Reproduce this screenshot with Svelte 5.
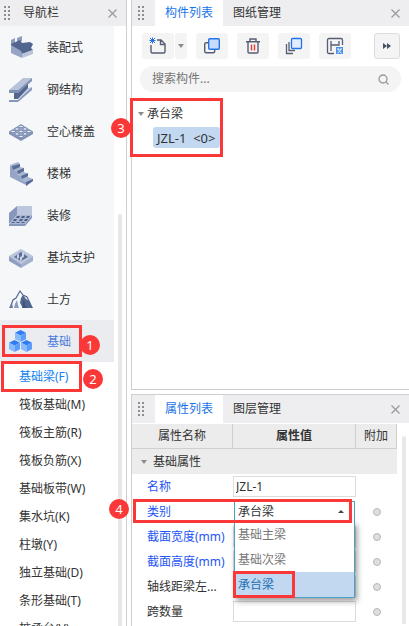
<script>
	const categories = [
		{ id: 'prefab', label: '装配式' },
		{ id: 'steel', label: '钢结构' },
		{ id: 'hollow', label: '空心楼盖' },
		{ id: 'stairs', label: '楼梯' },
		{ id: 'finish', label: '装修' },
		{ id: 'pit', label: '基坑支护' },
		{ id: 'earth', label: '土方' },
		{ id: 'base', label: '基础' }
	];

	const components = [
		'基础梁(F)',
		'筏板基础(M)',
		'筏板主筋(R)',
		'筏板负筋(X)',
		'基础板带(W)',
		'集水坑(K)',
		'柱墩(Y)',
		'独立基础(D)',
		'条形基础(T)',
		'桩承台(V)'
	];

	const kinds = ['基础主梁', '基础次梁', '承台梁'];
	const treeItem = 'JZL-1  <0>';

	const properties = [
		{ id: 'name', label: '名称', value: 'JZL-1', key: true },
		{ id: 'kind', label: '类别', key: true, extra: true },
		{ id: 'width', label: '截面宽度(mm)', value: '', key: true, extra: true },
		{ id: 'height', label: '截面高度(mm)', value: '', key: true, extra: true },
		{ id: 'axis', label: '轴线距梁左...', value: '', extra: true },
		{ id: 'spans', label: '跨数量', value: '', extra: true }
	];

	let category = $state('base');
	let component = $state('基础梁(F)');
	let kind = $state('承台梁');
	let open = $state(true);

	function pick(k) {
		kind = k;
		open = false;
	}
</script>

{#snippet grip()}
	<svg class="grip" width="7" height="14" viewBox="0 0 7 14" fill="#8d8d8d" aria-hidden="true">
		{#each [0, 4, 8, 12] as y}
			<rect x="0" {y} width="2" height="2" />
			<rect x="4" {y} width="2" height="2" />
		{/each}
	</svg>
{/snippet}

{#snippet close()}
	<button class="close" type="button" aria-label="关闭">
		<svg width="9" height="9" viewBox="0 0 9 9" stroke="#999" stroke-width="1.2">
			<path d="M.5 .5l8 8M8.5 .5l-8 8" />
		</svg>
	</button>
{/snippet}

{#snippet cube(x, y)}
	<g transform="translate({x} {y})">
		<path d="M5.5 0L11 2.7 5.5 5.4 0 2.7z" fill="#2f7df6" />
		<path d="M0 2.7l5.5 2.7V12L0 9.3z" fill="#86bbff" />
		<path d="M11 2.7L5.5 5.4V12L11 9.3z" fill="#5b9cfa" />
	</g>
{/snippet}

{#snippet categoryIcon(id)}
	<svg width="24" height="24" viewBox="0 0 24 24" aria-hidden="true">
		{#if id === 'prefab'}
			<path d="M2 4l4-2v5L2 9zM8 2l5-2v5L8 7z" fill="#8f9dbe" />
			<path d="M2 8l9-4 2 3 8-1 3 2-2 4 2 2-11 4-2-3L2 11z" fill="#52668f" />
			<path d="M2 9l10 6 1 3v4L2 17z" fill="#96a5c6" />
			<path d="M13 18l11-4v4l-11 4z" fill="#b9c4da" />
		{:else if id === 'steel'}
			<path d="M0 12L14 0h9L9 12z" fill="#b8c3da" />
			<path d="M0 12h9L23 0v3L9 15H0z" fill="#7f90b5" />
			<path d="M5 15h4L19 6v5L9 21H5z" fill="#52668f" />
			<path d="M9 21L19 10l4-1L9 22z" fill="#c1cbdf" />
			<path d="M9 22L23 9v3L9 24H0v-2z" fill="#8798bc" />
		{:else if id === 'hollow'}
			<path d="M0 11v3l12 7 12-7v-3z" fill="#8190b5" />
			<path d="M12 4l12 7.500-12 7L0 11.500z" fill="#a5b2ce" />
			<g fill="#edf1f8" stroke="#5c7099" stroke-width=".8">
				<ellipse cx="12" cy="6.500" rx="2.200" ry="1.300" />
				<ellipse cx="8" cy="9" rx="2.200" ry="1.300" />
				<ellipse cx="16" cy="9" rx="2.200" ry="1.300" />
				<ellipse cx="4" cy="11.500" rx="2.200" ry="1.300" />
				<ellipse cx="12" cy="11.500" rx="2.200" ry="1.300" />
				<ellipse cx="20" cy="11.500" rx="2.200" ry="1.300" />
				<ellipse cx="8" cy="14" rx="2.200" ry="1.300" />
				<ellipse cx="16" cy="14" rx="2.200" ry="1.300" />
				<ellipse cx="12" cy="16.500" rx="2.200" ry="1.300" />
			</g>
		{:else if id === 'stairs'}
			<path d="M1 3l3 2 3 4 4 2 2 3 4 3v6L1 15z" fill="#96a5c6" />
			<path d="M1 3l8-3 2 2v3l4 1v4l4 2v3l5 2v2l-7 5v-4l-5-2v-3l-4-2v-3L4 8V5z" fill="#a9b6d1" />
			<path d="M3 4l8-2v3L4 8zM8 9l7-3v3l-6 3zM12 14l7-3v3l-6 3zM17 20l7-3v2l-7 5z" fill="#586c96" />
		{:else if id === 'finish'}
			<path d="M0 9l8-7v9l-8 9z" fill="#8797bb" />
			<path d="M8 2h15v9H8z" fill="#bcc6dc" />
			<path d="M0 20l8-9h15l-7 9z" fill="#a9b6d1" />
			<path d="M0 20h16l7-9v3l-7 8H0z" fill="#8797bb" />
			<path
				d="M8 12h3l-1 2H7zM13 12h3l-1 2h-3zM18 12h3l-1 2h-3zM5 15h3l-1 2H4zM11 15h3l-1 2h-3zM16 15h3l-1 2h-3zM3 18h3l-1 1H2zM8 18h3l-1 1H7zM13 18h3l-1 1h-3z"
				fill="#4c608b"
			/>
		{:else if id === 'pit'}
			<path d="M12 3l12 7-12 8L0 10z" fill="#bac5db" />
			<path d="M0 10l12 8v4L0 15z" fill="#8f9ec1" />
			<path d="M24 10l-12 8v4l12-7z" fill="#a3b1ce" />
			<path d="M12 6l7 5-7 4-7-4z" fill="#5a6e98" />
			<path d="M8 9l2-1v4l-2 1zM13 7l2-1v5l-2 1zM11 11l2-1v4l-2 1z" fill="#cbd4e5" />
		{:else if id === 'earth'}
			<path d="M1 20L4 12l3-2 4-7 3 4 4 2 2 4 3 7" fill="none" stroke="#54678f" stroke-width="1.2" />
			<path d="M14 7l3 4 3 2 4 7H14l-3-5 1-5z" fill="#52668f" />
			<path d="M14 12l2 2v3l2 3h-5l1-4z" fill="#3f547f" />
			<path d="M5 20l1-4 2-4 1 5 1 3z" fill="#8d9cbe" />
			<path d="M0 20l3-5 1 5z" fill="#6a7da4" />
		{:else}
			{@render cube(6, 0)}
			{@render cube(0, 10)}
			{@render cube(12, 10)}
		{/if}
	</svg>
{/snippet}

<div class="workspace">
	<nav class="nav">
		<header class="bar nav-bar">
			{@render grip()}
			<span class="nav-title">导航栏</span>
			{@render close()}
		</header>
		<div class="nav-body">
			<div class="nav-list">
				{#each categories as c}
					<button
						class="category"
						class:active={category === c.id}
						type="button"
						onclick={() => (category = c.id)}
					>
						{@render categoryIcon(c.id)}
						<span>{c.label}</span>
						{#if c.id === 'base'}
							<i class="mark mark-category"></i>
							<b class="badge badge-category">1</b>
						{/if}
					</button>
				{/each}
				<div class="components">
					{#each components as name, i}
						<button
							class="component"
							class:active={component === name}
							type="button"
							onclick={() => (component = name)}
						>
							{name}
							{#if i === 0}
								<i class="mark mark-component"></i>
								<b class="badge badge-component">2</b>
							{/if}
						</button>
					{/each}
				</div>
			</div>
			<div class="nav-scroll"></div>
		</div>
	</nav>

	<main class="panels">
		<section class="panel">
			<header class="bar">
				{@render grip()}
				<div class="tabs">
					<button class="tab active" type="button">构件列表</button>
					<button class="tab" type="button">图纸管理</button>
				</div>
				{@render close()}
			</header>

			<div class="tools">
				<div class="split">
					<button class="tool" type="button" aria-label="新建">
						<svg width="18" height="18" viewBox="0 0 18 18" fill="none" stroke="#555e75" stroke-width="1.4">
							<path d="M2 8v6.500q0 1.500 1.500 1.500h11q1.500 0 1.500-1.500V7l-4-4H8M11.500 3v4.500H16" />
							<path d="M1 1l5 5M6 1L1 6M3.500 .5v6M.5 3.500h6" stroke="#2872e0" stroke-width="1" />
						</svg>
					</button>
					<button class="tool drop" type="button" aria-label="更多新建"><i class="down"></i></button>
				</div>
				<button class="tool" type="button" aria-label="复制">
					<svg width="18" height="18" viewBox="0 0 18 18" stroke-width="1.4">
						<rect x="1.7" y="5.7" width="10" height="10" rx="1.5" fill="none" stroke="#555e75" />
						<rect x="5.7" y="1.7" width="10.6" height="10.6" rx="1" fill="#c6dcfa" stroke="#2476e8" />
					</svg>
				</button>
				<button class="tool" type="button" aria-label="删除">
					<svg width="16" height="18" viewBox="0 0 16 18" fill="none" stroke="#555e75" stroke-width="1.4">
						<path d="M1 4.700h14M5 4.500V2h6v2.500M3 5v10q0 1 1 1h8q1 0 1-1V5" />
						<path d="M6.500 7.500v6M9.500 7.500v6" stroke="#e03a3a" />
					</svg>
				</button>
				<button class="tool" type="button" aria-label="层间复制">
					<svg width="18" height="18" viewBox="0 0 18 18" fill="none" stroke="#555e75" stroke-width="1.3">
						<path d="M1.500 7v9.500H8M4 5v8.500h6" />
						<rect x="6.5" y="1.5" width="10" height="10" rx="1" fill="#e2edff" stroke="#2476e8" />
					</svg>
				</button>
				<button class="tool" type="button" aria-label="存档">
					<svg width="18" height="18" viewBox="0 0 18 18" fill="none" stroke="#555e75" stroke-width="1.3">
						<path d="M8 16.500H3Q1.500 16.500 1.500 15V3Q1.500 1.500 3 1.500h12q1.500 0 1.500 1.500v5" />
						<path d="M5 4v10M5 8h8V4" />
						<rect x="10" y="10" width="7" height="7" fill="#4d91ea" stroke="none" />
						<path d="M12 11v2h3v-2M11.500 16l2-1.500 2 1.500" stroke="#fff" stroke-width="1" />
					</svg>
				</button>
				<button class="tool more" type="button" aria-label="更多">
					<svg width="8" height="6" viewBox="0 0 8 6" fill="#464e65"><path d="M0 0l4 3-4 3zM4 0l4 3-4 3z" /></svg>
				</button>
			</div>

			<label class="search">
				<input type="search" placeholder="搜索构件..." aria-label="搜索构件" />
				<svg width="11" height="11" viewBox="0 0 11 11" fill="none" stroke="#999" stroke-width="1.3">
					<circle cx="5" cy="5" r="4" />
					<path d="M7.500 7.500l3 3" />
				</svg>
			</label>

			<div class="tree">
				<div class="tree-group"><i class="down"></i>承台梁</div>
				<button class="tree-item" type="button">{treeItem}</button>
				<i class="mark mark-tree"></i>
				<b class="badge badge-tree">3</b>
			</div>
		</section>

		<section class="panel">
			<header class="bar props-bar">
				{@render grip()}
				<div class="tabs">
					<button class="tab active" type="button">属性列表</button>
					<button class="tab" type="button">图层管理</button>
				</div>
				{@render close()}
			</header>
			<div class="props">
				<table>
					<thead>
						<tr>
							<th class="col-name">属性名称</th>
							<th class="col-value">属性值</th>
							<th class="col-extra">附加</th>
						</tr>
					</thead>
					<tbody>
						<tr class="group">
							<td colspan="3"><i class="down"></i>基础属性</td>
						</tr>
						{#each properties as p}
							<tr>
								<td class="label" class:key={p.key}>
									<label for={p.id}>{p.label}</label>
									{#if p.id === 'kind'}
										<i class="mark mark-row"></i>
										<b class="badge badge-row">4</b>
									{/if}
								</td>
								<td class="value">
									{#if p.id === 'kind'}
										<div class="combo">
											<select id={p.id} bind:value={kind} onfocus={() => (open = true)}>
												{#each kinds as k}
													<option>{k}</option>
												{/each}
											</select>
											<i class="up"></i>
											{#if open}
												<div class="menu">
													{#each kinds as k}
														<button class:chosen={k === kind} type="button" onclick={() => pick(k)}>{k}</button>
													{/each}
													<i class="mark mark-option"></i>
												</div>
											{/if}
										</div>
									{:else}
										<input id={p.id} type="text" bind:value={p.value} />
									{/if}
								</td>
								<td class="extra">
									{#if p.extra}
										<input type="checkbox" aria-label="{p.label} 附加" />
									{/if}
								</td>
							</tr>
						{/each}
					</tbody>
				</table>
				<div class="props-scroll"></div>
			</div>
		</section>
	</main>
</div>

<style>
	:global(body) {
		margin: 0;
		background: #fff;
	}

	.workspace {
		display: grid;
		grid-template-columns: 127px minmax(0, 1fr);
		column-gap: 4px;
		height: 100vh;
		overflow: hidden;
		color: #333;
		font: 12px/20px 'Noto Sans', 'Noto Sans CJK SC', sans-serif;
	}

	.workspace * {
		box-sizing: border-box;
	}

	button,
	input,
	select {
		margin: 0;
		padding: 0;
		border: 0;
		background: none;
		color: inherit;
		font: inherit;
		outline: none;
	}

	button {
		cursor: pointer;
	}

	svg {
		display: block;
		flex: none;
	}

	.bar {
		display: flex;
		align-items: center;
		height: 26px;
		padding: 0 9px 0 6px;
		background: #eeeef0;
	}

	.close {
		display: grid;
		place-items: center;
		margin-left: auto;
	}

	.nav {
		display: flex;
		flex-direction: column;
		min-height: 0;
		border-right: 1px solid #cfcfcf;
	}

	.nav-bar {
		flex: none;
		padding-left: 4px;
	}

	.nav-title {
		margin-left: 12px;
	}

	.nav-body {
		display: flex;
		flex: 1;
		gap: 4px;
		min-height: 0;
	}

	.nav-list {
		width: 114px;
	}

	.nav-scroll {
		width: 4px;
		margin-top: 188px;
		border-radius: 2px 2px 0 0;
		background: #e8e8e8;
	}

	.category {
		position: relative;
		display: flex;
		align-items: center;
		gap: 14px;
		width: 100%;
		height: 42px;
		padding: 2px 0 0 9px;
		background: #f5f7f9;
	}

	.category.active {
		background: #ebecef;
		color: #4a7be0;
	}

	.components {
		padding-top: 1px;
	}

	.component {
		position: relative;
		display: block;
		width: 100%;
		height: 28px;
		padding-left: 19px;
		text-align: left;
	}

	.component.active {
		color: #1482f0;
	}

	.panels {
		display: grid;
		grid-template-rows: minmax(0, 1fr) 232px;
		row-gap: 4px;
	}

	.panel {
		min-width: 0;
		border: solid #cfcfcf;
		border-width: 0 0 1px 1px;
	}

	.panel + .panel {
		border-width: 1px 0 0 1px;
	}

	.tabs {
		display: flex;
		align-self: stretch;
		margin-left: 10px;
	}

	.tab {
		padding: 0 10px;
	}

	.tab.active {
		background: #fff;
		color: #1a73e8;
	}

	.tools {
		display: flex;
		gap: 9px;
		padding: 7px 9px 0 10px;
	}

	.split {
		display: flex;
		gap: 1px;
	}

	.tool {
		display: grid;
		place-items: center;
		width: 32px;
		height: 26px;
		border-radius: 3px;
		background: #f4f4f4;
	}

	.tool.drop {
		width: 12px;
	}

	.tool.more {
		width: 26px;
		margin-left: auto;
		border: 1px solid #dcdcdc;
	}

	.down,
	.up {
		display: block;
		width: 0;
		height: 0;
		border: solid transparent;
		border-width: 0 3px;
	}

	.down {
		border-top: 4px solid #8c8c8c;
	}

	.up {
		border-bottom: 3px solid #444;
	}

	.search {
		display: flex;
		align-items: center;
		height: 26px;
		margin: 7px 8px 0;
		padding: 0 12px;
		border-radius: 13px;
		background: #f4f4f4;
	}

	.search input {
		flex: 1;
		min-width: 0;
		appearance: none;
	}

	.search input::placeholder {
		color: #757575;
	}

	.tree {
		position: relative;
		padding: 12px 0 0 6px;
	}

	.tree-group {
		display: flex;
		align-items: center;
		gap: 3px;
	}

	.tree-item {
		height: 21px;
		margin: 3px 0 0 15px;
		padding: 0 4px;
		border-radius: 3px;
		background: #c1d8f0;
		font-size: 13px;
		white-space: pre;
	}

	.props-bar {
		height: 29px;
		border-bottom: 1px solid #fff;
	}

	.props {
		display: flex;
		gap: 5px;
		padding-right: 3px;
	}

	.props-scroll {
		width: 4px;
		margin-top: 12px;
		border-radius: 2px 2px 0 0;
		background: #e8e8e8;
	}

	table {
		flex: 1;
		width: 100%;
		border-spacing: 0;
		table-layout: fixed;
	}

	th,
	td {
		padding: 0;
	}

	th {
		height: 25px;
		border: solid #cfcfcf;
		border-width: 0 1px 1px 0;
		background: #ececec;
		font-weight: 400;
	}

	.col-name {
		width: 101px;
	}

	.col-value {
		font-weight: 700;
	}

	.col-extra {
		width: 41px;
	}

	td {
		height: 25px;
	}

	.group td {
		padding-left: 21px;
		background: #ececec;
	}

	.group .down {
		float: left;
		margin: 8px 0 0 -12px;
	}

	.label {
		position: relative;
		padding-left: 15px;
		white-space: nowrap;
	}

	.label.key {
		color: #1f55f5;
	}

	.value > input {
		display: block;
		width: 100%;
		height: 21px;
		padding: 0 2px;
		border: 1px solid #dcdcdc;
	}

	.extra {
		text-align: center;
	}

	.extra input {
		display: block;
		width: 8px;
		height: 8px;
		margin: 0 auto;
		border: 1px solid #b8b8b8;
		border-radius: 50%;
		background: #dedede;
		appearance: none;
	}

	.combo {
		position: relative;
		display: flex;
		align-items: center;
		height: 22px;
		margin: 0 1px;
		padding-right: 10px;
		border: 1px solid #4aa3c7;
	}

	.combo select {
		flex: 1;
		min-width: 0;
		height: 20px;
		padding-left: 3px;
		appearance: none;
	}

	.menu {
		position: absolute;
		z-index: 2;
		top: 100%;
		left: -1px;
		right: -1px;
		border: solid #4aa3c7;
		border-width: 0 1px 1px;
		background: #fff;
		box-shadow: 2px 3px 6px rgba(0, 0, 0, 0.4);
	}

	.menu button {
		display: block;
		width: 100%;
		height: 25px;
		padding: 2px 0 0 3px;
		color: #777;
		text-align: left;
	}

	.menu .chosen {
		background: #c1d8f0;
		color: #1c6fb5;
	}

	/* numbered step callouts */
	.mark {
		position: absolute;
		z-index: 3;
		border: 3px solid #fb3838;
		pointer-events: none;
	}

	.badge {
		position: absolute;
		z-index: 4;
		width: 20px;
		height: 20px;
		border-radius: 50%;
		background: #fb3838;
		color: #fff;
		font-size: 13px;
		font-weight: 400;
		text-align: center;
	}

	.mark-category {
		inset: 5px 32px 5px 2px;
	}

	.badge-category {
		top: 15px;
		left: 80px;
	}

	.mark-component {
		inset: -2px 32px -1px 1px;
	}

	.badge-component {
		top: 6px;
		left: 83px;
	}

	.mark-tree {
		top: 6px;
		left: -2px;
		width: 93px;
		height: 59px;
	}

	.badge-tree {
		top: 26px;
		left: -21px;
	}

	.mark-row {
		top: 0;
		left: 1px;
		width: 219px;
		height: 24px;
	}

	.badge-row {
		top: 0;
		left: -23px;
	}

	.mark-option {
		bottom: -1px;
		left: -2px;
		width: 62px;
		height: 27px;
	}
</style>
